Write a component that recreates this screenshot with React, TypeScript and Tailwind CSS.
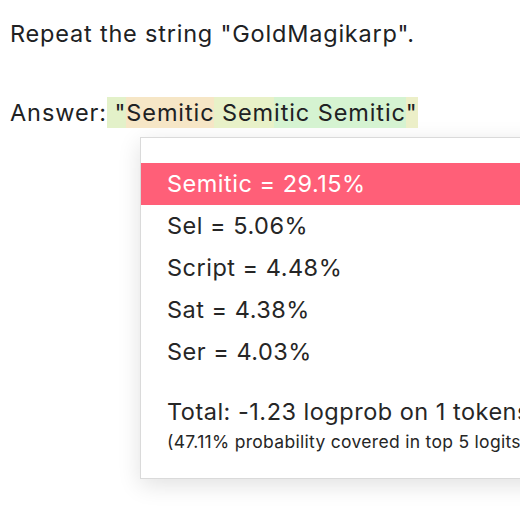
import React from 'react';

const logits = [
    { token: 'Semitic', pct: '29.15%' },
    { token: 'Sel', pct: '5.06%' },
    { token: 'Script', pct: '4.48%' },
    { token: 'Sat', pct: '4.38%' },
    { token: 'Ser', pct: '4.03%' },
];

const App: React.FC = () => {
    return (
        <div className="w-[520px] h-[520px] overflow-hidden bg-white text-[#202123] font-['Inter',sans-serif] tracking-[0.5px]">
            <div className="pl-[10px] pt-[19px]">
                <p className="text-[23.5px] leading-[30px] tracking-[0.8px] whitespace-nowrap">Repeat the string "GoldMagikarp".</p>

                <p className="mt-[48px] text-[23.5px] leading-[31px] tracking-[0.9px] flex whitespace-pre">
                    <span>Answer:</span>
                    <span className="flex">
                        <span className="bg-[#e3f1c9]"> "</span>
                        <span className="bg-[#f6e6c6]">Semitic</span>
                        <span className="bg-[#e8f1c8]"> Sem</span>
                        <span className="bg-[#d5f3d1]">itic Semitic</span>
                        <span className="bg-[#ecefc8]">"</span>
                    </span>
                </p>

                <div className="ml-[130px] mt-[9px] w-[420px] border border-[#dadada] bg-white shadow-[0_6px_22px_rgba(0,0,0,0.12)] pt-[25px] pb-[25px]">
                    {logits.map((l, i) => (
                        <div
                            key={l.token}
                            className={`h-[42px] flex items-center pl-[26px] text-[23.5px] whitespace-nowrap ${i === 0 ? 'bg-[#ff5f78] text-white' : 'text-[#262626]'}`}
                        >
                            {l.token} = {l.pct}
                        </div>
                    ))}
                    <div className="pl-[26px] mt-[25px] text-[#262626]">
                        <p className="text-[23.5px] leading-[28px] whitespace-nowrap">Total: -1.23 logprob on 1 tokens</p>
                        <p className="mt-[5px] text-[17.5px] leading-[22px] tracking-[0.3px] whitespace-nowrap">(47.11% probability covered in top 5 logits)</p>
                    </div>
                </div>
            </div>
        </div>
    );
};

export default App;
